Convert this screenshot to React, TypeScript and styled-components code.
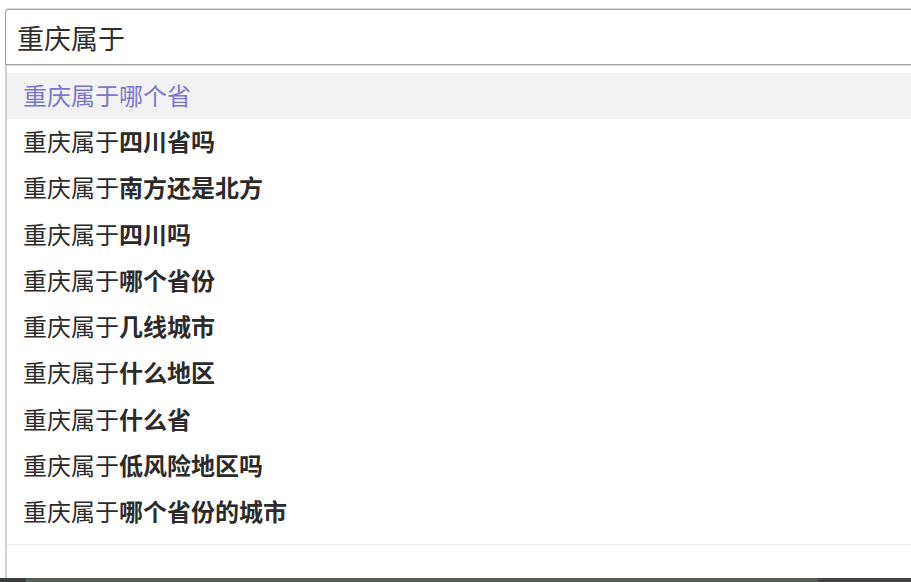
import React from "react";
import styled, { createGlobalStyle } from "styled-components";

const Global = createGlobalStyle`
  html, body { margin: 0; padding: 0; background: #fff; }
  body { overflow: hidden; font-family: "Noto Sans CJK SC", "Noto Sans", sans-serif; }
`;

const Page = styled.div`
  width: 911px;
  height: 582px;
  display: flex;
  flex-direction: column;
  overflow: hidden;
`;

const Main = styled.div`
  flex: 1;
  display: flex;
  flex-direction: column;
  padding: 9px 0 0 5px;
  min-height: 0;
`;

const SearchBox = styled.div`
  box-sizing: border-box;
  width: 940px;
  height: 56px;
  flex: none;
  border: 1px solid #a4a4a4;
  border-right: none;
  border-top-left-radius: 4px;
  box-shadow: 0 -1px 0 #d8d8d8, 0 1px 0 #d4d4d4;
  display: flex;
  align-items: center;
  padding: 1px 0 0 11px;
  font-size: 27px;
  color: #2e2e2e;
  font-family: "Noto Sans CJK SC", sans-serif;
  line-height: 1;
`;

const Dropdown = styled.div`
  box-sizing: border-box;
  width: 940px;
  flex: 1;
  display: flex;
  flex-direction: column;
  border-left: 2px solid #cfcfcf;
  padding-top: 7px;
  margin-top: 1px;
`;

const List = styled.ul`
  list-style: none;
  margin: 0;
  padding: 0;
`;

const Row = styled.li<{ $active?: boolean }>`
  box-sizing: border-box;
  height: 46.3px;
  display: flex;
  align-items: center;
  padding: 0 0 3px 16px;
  font-size: 24px;
  line-height: 1;
  color: ${(p) => (p.$active ? "#7a76cf" : "#2b2b2b")};
  background: ${(p) => (p.$active ? "#f2f2f2" : "transparent")};
  white-space: nowrap;
`;

const Prefix = styled.span`
  font-weight: 400;
`;

const Rest = styled.b<{ $active?: boolean }>`
  font-weight: ${(p) => (p.$active ? 400 : 700)};
`;

const Footer = styled.div`
  flex: 1;
  margin-top: 8px;
  border-top: 1px solid #eeeeee;
`;

const Strip = styled.div`
  height: 4px;
  flex: none;
  display: flex;
`;

const StripPart = styled.div<{ $w: string; $c: string }>`
  width: ${(p) => p.$w};
  background: ${(p) => p.$c};
`;

const query = "重庆属于";
const items = [
  "哪个省",
  "四川省吗",
  "南方还是北方",
  "四川吗",
  "哪个省份",
  "几线城市",
  "什么地区",
  "什么省",
  "低风险地区吗",
  "哪个省份的城市",
];

export default function App() {
  return (
    <Page>
      <Global />
      <Main>
        <SearchBox>{query}</SearchBox>
        <Dropdown>
          <List>
            {items.map((t, i) => (
              <Row key={t} $active={i === 0}>
                <Prefix>{query}</Prefix>
                <Rest $active={i === 0}>{t}</Rest>
              </Row>
            ))}
          </List>
          <Footer />
        </Dropdown>
      </Main>
      <Strip>
        <StripPart $w="26px" $c="#3b3e3d" />
        <StripPart $w="792px" $c="#56605a" />
        <StripPart $w="93px" $c="#454545" />
      </Strip>
    </Page>
  );
}
